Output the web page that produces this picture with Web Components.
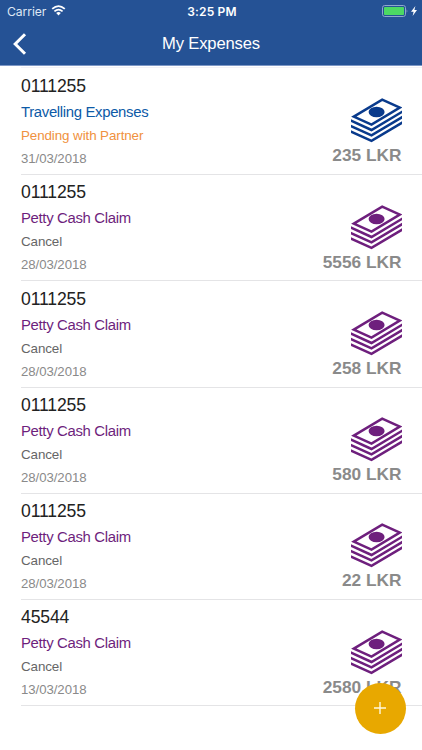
<!DOCTYPE html>
<html lang="en">
<head>
<meta charset="utf-8">
<title>My Expenses</title>
<style>
    html, body {
        margin: 0;
        height: 100%;
        overflow: hidden;
        background: #fff;
        font-family: "Liberation Sans", Arial, sans-serif;
    }
</style>
</head>
<body>
<expenses-page>
    <status-bar slot="header" carrier="Carrier" time="3:25 PM"></status-bar>
    <nav-header slot="header">My Expenses</nav-header>
    <expense-item number="0111255" amount="235 LKR" date="31/03/2018" type="travel" status="pending">
        Travelling Expenses<span slot="status">Pending with Partner</span>
    </expense-item>
    <expense-item number="0111255" amount="5556 LKR" date="28/03/2018">
        Petty Cash Claim<span slot="status">Cancel</span>
    </expense-item>
    <expense-item number="0111255" amount="258 LKR" date="28/03/2018">
        Petty Cash Claim<span slot="status">Cancel</span>
    </expense-item>
    <expense-item number="0111255" amount="580 LKR" date="28/03/2018">
        Petty Cash Claim<span slot="status">Cancel</span>
    </expense-item>
    <expense-item number="0111255" amount="22 LKR" date="28/03/2018">
        Petty Cash Claim<span slot="status">Cancel</span>
    </expense-item>
    <expense-item number="45544" amount="2580 LKR" date="13/03/2018">
        Petty Cash Claim<span slot="status">Cancel</span>
    </expense-item>
    <add-button slot="action"></add-button>
</expenses-page>

<script>
class ExpensesPage extends HTMLElement {
    constructor() {
        super();
        this.attachShadow({ mode: 'open' });
    }

    connectedCallback() {
        this.shadowRoot.innerHTML = /* html */ `
            <style>
                :host {
                    display: flex;
                    flex-direction: column;
                    position: relative;
                    height: 750px;
                    overflow: hidden;
                }
                header {
                    background: #255295;
                    border-bottom: 1px solid #7d97c6;
                    height: 65px;
                    flex: none;
                }
                main {
                    display: flex;
                    flex-direction: column;
                    margin: 1px 0 0 21px;
                    border-top: 1px solid #f3f2f7;
                }
            </style>
            <header><slot name="header"></slot></header>
            <main><slot></slot></main>
            <slot name="action"></slot>
        `;
    }
}

class StatusBar extends HTMLElement {
    constructor() {
        super();
        this.attachShadow({ mode: 'open' });
    }

    connectedCallback() {
        this.shadowRoot.innerHTML = /* html */ `
            <style>
                :host {
                    display: grid;
                    grid-template-columns: 1fr auto 1fr;
                    align-items: center;
                    height: 22px;
                    padding: 0 5px 0 7px;
                    box-sizing: border-box;
                    color: #fff;
                    font-family: Inter, "Liberation Sans", sans-serif;
                    font-size: 12.2px;
                }
                .left, .right {
                    display: flex;
                    align-items: center;
                }
                .left { gap: 5px; color: #dfe7f4; letter-spacing: -0.1px; }
                .right { justify-content: flex-end; gap: 3px; }
                .time { font-weight: 600; font-size: 12px; letter-spacing: 0.15px; }
                .left svg { margin-top: -1px; }
                svg { display: block; }
            </style>
            <div class="left">
                <span>${this.getAttribute('carrier')}</span>
                <svg width="15" height="11" viewBox="0 0 14 11" fill="none" stroke="#fff" stroke-width="1.8">
                    <path d="M.7 3.9Q7-1.7 13.3 3.9M2.9 6.4Q7 2.9 11.1 6.4"/>
                    <path d="M4.7 7.9Q7 6.2 9.3 7.9L7 10.4Z" fill="#fff" stroke="none"/>
                </svg>
            </div>
            <span class="time">${this.getAttribute('time')}</span>
            <div class="right">
                <svg width="26" height="12" viewBox="0 0 26 12">
                    <rect x=".5" y=".5" width="23" height="11" rx="2.2" fill="none" stroke="#8fa8cd"/>
                    <rect x="2" y="2" width="20" height="8" rx=".8" fill="#4cd964"/>
                    <path d="M24.7 4.2Q26 6 24.7 7.8Z" fill="#a5b8d6"/>
                </svg>
                <svg width="6" height="10" viewBox="0 0 6 10"><path d="M4.4 0L0 5.7H2.6L1.6 10L6 4.1H3.4Z" fill="#fff"/></svg>
            </div>
        `;
    }
}

class NavHeader extends HTMLElement {
    constructor() {
        super();
        this.attachShadow({ mode: 'open' });
    }

    connectedCallback() {
        this.shadowRoot.innerHTML = /* html */ `
            <style>
                :host {
                    display: grid;
                    grid-template-columns: 1fr auto 1fr;
                    align-items: center;
                    height: 43px;
                    color: #fff;
                    font-size: 16.6px;
                    letter-spacing: -0.15px;
                }
                svg { display: block; margin: 0 0 0 13px; }
            </style>
            <svg width="14" height="22" viewBox="0 0 14 22" fill="none" stroke="#fff" stroke-width="3">
                <path d="M12 1.3L2.2 11L12 20.7"/>
            </svg>
            <span><slot></slot></span>
        `;
    }
}

class MoneyIcon extends HTMLElement {
    constructor() {
        super();
        this.attachShadow({ mode: 'open' });
    }

    connectedCallback() {
        this.shadowRoot.innerHTML = /* html */ `
            <style>
                :host { display: block; width: 51px; height: 45px; }
                svg { display: block; }
            </style>
            <svg width="51" height="45" viewBox="0 0 51 45" fill="none" stroke="currentColor" stroke-width="2.5">
                <path d="M2.8 18.6L31.2 1.6L48.8 9.6L20.5 26.6Z"/>
                <ellipse cx="25.6" cy="14" rx="8" ry="5.3" fill="currentColor" stroke="none"/>
                <path d="M-2 21.8L20.5 32L54 12.1M-2 27.2L20.5 37.4L54 17.5M-2 32.6L20.5 42.8L54 22.9"/>
            </svg>
        `;
    }
}

class ExpenseItem extends HTMLElement {
    constructor() {
        super();
        this.attachShadow({ mode: 'open' });
    }

    connectedCallback() {
        this.shadowRoot.innerHTML = /* html */ `
            <style>
                :host {
                    --accent: #6e1f7d;
                    --status: #666;
                    display: flex;
                    justify-content: space-between;
                    box-sizing: border-box;
                    height: 106.25px;
                    border-bottom: 1px solid #e4e4e6;
                    padding-right: 20.5px;
                }
                :host(:first-of-type) { height: 107px; }
                :host([type="travel"]) { --accent: #0d5aa7; --icon: #093a8c; }
                :host([status="pending"]) { --status: #f09140; }
                .info { padding-top: 5.3px; }
                :host(:first-of-type) .info { padding-top: 6px; }
                .number { font-size: 17.6px; letter-spacing: -0.15px; line-height: 24px; color: #222; }
                .type { font-size: 14.9px; letter-spacing: -0.33px; line-height: 28px; color: var(--accent); }
                .status { font-size: 13.4px; letter-spacing: -0.1px; line-height: 19px; color: var(--status); }
                .date { font-size: 13.2px; letter-spacing: -0.05px; line-height: 27px; color: #8a8a8a; }
                .total {
                    display: flex;
                    flex-direction: column;
                    align-items: flex-end;
                    padding-top: 29.5px;
                }
                :host(:first-of-type) .total { padding-top: 30px; }
                money-icon { color: var(--icon, var(--accent)); }
                .amount { font-size: 17.3px; line-height: 25px; font-weight: bold; color: #8a8a8a; }
            </style>
            <div class="info">
                <div class="number">${this.getAttribute('number')}</div>
                <div class="type"><slot></slot></div>
                <div class="status"><slot name="status"></slot></div>
                <div class="date">${this.getAttribute('date')}</div>
            </div>
            <div class="total">
                <money-icon></money-icon>
                <div class="amount">${this.getAttribute('amount')}</div>
            </div>
        `;
    }
}

class AddButton extends HTMLElement {
    constructor() {
        super();
        this.attachShadow({ mode: 'open' });
    }

    connectedCallback() {
        this.shadowRoot.innerHTML = /* html */ `
            <style>
                :host {
                    position: absolute;
                    right: 16.5px;
                    bottom: 16.5px;
                    width: 51px;
                    height: 51px;
                    border-radius: 50%;
                    background: #e8a800;
                    display: flex;
                    align-items: center;
                    justify-content: center;
                }
            </style>
            <svg width="12" height="12" viewBox="0 0 12 12" stroke="#fff8dc" stroke-width="1.4"><path d="M6 0V12M0 6H12"/></svg>
        `;
    }
}

customElements.define('money-icon', MoneyIcon);
customElements.define('status-bar', StatusBar);
customElements.define('nav-header', NavHeader);
customElements.define('expense-item', ExpenseItem);
customElements.define('add-button', AddButton);
customElements.define('expenses-page', ExpensesPage);
</script>
</body>
</html>
